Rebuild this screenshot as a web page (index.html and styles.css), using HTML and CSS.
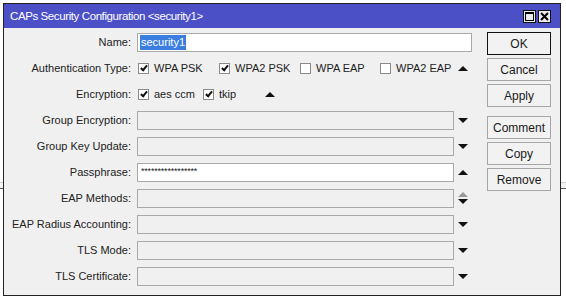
FILE: index.html
```html
<!DOCTYPE html>
<html lang="en">
<head>
  <meta charset="UTF-8" />
  <title>CAPs Security Configuration</title>
  <link rel="stylesheet" href="styles.css">
</head>
<body>
  <div class="window">
    <div class="titlebar">
      <span class="title">CAPs Security Configuration &lt;security1&gt;</span>
      <div class="title-btns">
        <span class="tbtn"><svg width="9" height="9" viewBox="0 0 9 9"><rect x="0.5" y="0.5" width="8" height="8" fill="none" stroke="#000"/><rect x="0" y="0" width="9" height="2" fill="#000"/></svg></span>
        <span class="tbtn"><svg width="9" height="9" viewBox="0 0 9 9"><path d="M1 1 L8 8 M8 1 L1 8" stroke="#000" stroke-width="2"/></svg></span>
      </div>
    </div>

    <div class="content">
      <div class="form">
        <div class="row">
          <label>Name:</label>
          <div class="field active wide"><span class="sel">security1</span></div>
        </div>
        <div class="row">
          <label>Authentication Type:</label>
          <div class="checks">
            <span class="chk w81"><span class="box on"></span>WPA PSK</span>
            <span class="chk w81"><span class="box on"></span>WPA2 PSK</span>
            <span class="chk w80"><span class="box"></span>WPA EAP</span>
            <span class="chk"><span class="box"></span>WPA2 EAP</span>
          </div>
          <span class="arrow up"></span>
        </div>
        <div class="row">
          <label>Encryption:</label>
          <div class="checks">
            <span class="chk w65"><span class="box on"></span>aes ccm</span>
            <span class="chk w62"><span class="box on"></span>tkip</span>
            <span class="arrow up"></span>
          </div>
        </div>
        <div class="row">
          <label>Group Encryption:</label>
          <div class="field"></div>
          <span class="arrow down"></span>
        </div>
        <div class="row">
          <label>Group Key Update:</label>
          <div class="field"></div>
          <span class="arrow down"></span>
        </div>
        <div class="row">
          <label>Passphrase:</label>
          <div class="field active"><span class="pass">*****************</span></div>
          <span class="arrow up"></span>
        </div>
        <div class="row">
          <label>EAP Methods:</label>
          <div class="field"></div>
          <span class="updown"><span class="arrow up gray"></span><span class="arrow down"></span></span>
        </div>
        <div class="row">
          <label>EAP Radius Accounting:</label>
          <div class="field"></div>
          <span class="arrow down"></span>
        </div>
        <div class="row">
          <label>TLS Mode:</label>
          <div class="field"></div>
          <span class="arrow down"></span>
        </div>
        <div class="row">
          <label>TLS Certificate:</label>
          <div class="field"></div>
          <span class="arrow down"></span>
        </div>
      </div>

      <div class="buttons">
        <button class="btn default">OK</button>
        <button class="btn">Cancel</button>
        <button class="btn">Apply</button>
        <button class="btn spaced">Comment</button>
        <button class="btn">Copy</button>
        <button class="btn">Remove</button>
      </div>
    </div>
  </div>
</body>
</html>
```

FILE: styles.css
```css
body {
  margin: 0;
  font-family: 'Liberation Sans', Arial, sans-serif;
  font-size: 11px;
  color: #222;
  background:
    linear-gradient(#fff 0 182px, #cfcfcf 182px 183px, #f4f4f4 183px 188px, #555 188px 189px, #fff 189px);
  width: 566px;
  height: 300px;
  overflow: hidden;
}
.window {
  margin: 3px 0 0 3px;
  width: 556px;
  height: 291px;
  border: 1px solid #222;
  background: #f0f0f0;
  display: flex;
  flex-direction: column;
}
.titlebar {
  height: 24px;
  background: #4b50c6;
  color: #fff;
  display: flex;
  align-items: center;
  justify-content: space-between;
  padding: 0 9px 0 6px;
  font-size: 11.5px;
}
.title {
  letter-spacing: -0.4px;
}
.title-btns {
  display: flex;
  gap: 2px;
}
.tbtn {
  width: 11px;
  height: 11px;
  background: #ececec;
  border: 1px solid #111;
  display: flex;
  align-items: center;
  justify-content: center;
}
.content {
  display: flex;
  padding-top: 1px;
}
.form {
  width: 468px;
  display: flex;
  flex-direction: column;
}
.row {
  height: 26px;
  display: grid;
  grid-template-columns: 133px 317px 18px;
  align-items: center;
}
.row label {
  text-align: right;
  padding-right: 6px;
  white-space: nowrap;
}
.field {
  height: 17px;
  border: 1px solid #a9a9a9;
  background: #f0f0f0;
  display: flex;
  align-items: center;
  padding-left: 2px;
}
.field.active {
  background: #fff;
}
.field.wide {
  grid-column: 2 / 4;
  width: 331px;
}
.sel {
  background: #3a7ee0;
  color: #fff;
  padding: 1px 1px;
  line-height: 13px;
}
.pass {
  font-size: 9px;
  line-height: 9px;
  letter-spacing: -0.2px;
  padding-left: 1px;
  margin-top: -2px;
}
.checks {
  display: flex;
  align-items: center;
  padding-left: 1px;
  grid-column: 2 / 3;
  white-space: nowrap;
}
.chk {
  display: inline-flex;
  align-items: center;
  gap: 5px;
  flex: none;
}
.w81 { width: 81px; }
.w80 { width: 80px; }
.w65 { width: 65px; }
.w62 { width: 62px; }
.box {
  width: 9px;
  height: 9px;
  border: 1px solid #8a8a8a;
  background: #fff;
  position: relative;
}
.box.on::after {
  content: "";
  position: absolute;
  left: 3px;
  top: 0px;
  width: 2px;
  height: 5px;
  border: solid #111;
  border-width: 0 2px 2px 0;
  transform: rotate(40deg);
}
.arrow {
  width: 0;
  height: 0;
  border-left: 5px solid transparent;
  border-right: 5px solid transparent;
  justify-self: center;
}
.arrow.up {
  border-bottom: 5px solid #111;
}
.arrow.down {
  border-top: 5px solid #111;
}
.arrow.gray {
  border-bottom-color: #9a9a9a;
}
.updown {
  justify-self: center;
  display: flex;
  flex-direction: column;
  gap: 2px;
}
.buttons {
  margin-left: 15px;
  padding-top: 3px;
  display: flex;
  flex-direction: column;
  gap: 3px;
  width: 64px;
}
.btn {
  height: 23px;
  font-family: inherit;
  font-size: 12px;
  color: #1a1a1a;
  background: #f2f2f2;
  border: 1px solid #a6a6a6;
  padding: 0;
}
.btn.default {
  border-color: #111;
}
.btn.spaced {
  margin-top: 6px;
}
```
